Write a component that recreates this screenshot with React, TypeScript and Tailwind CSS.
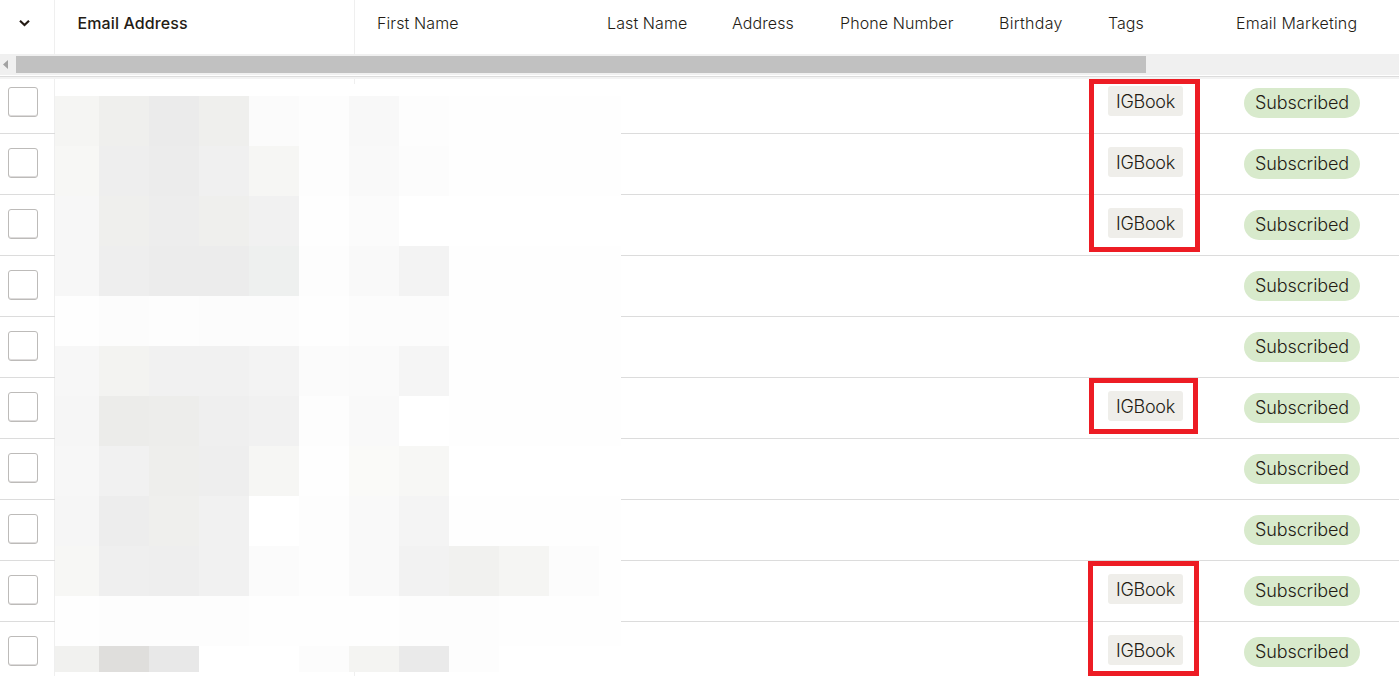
import { clsx } from "clsx";

interface Contact {
  id: number;
  tag?: string;
  status: string;
}

const GRID = "grid grid-cols-[55px_300px_252px_125px_108px_159px_109px_136px_155px]";

const COLUMNS = [
  { label: "First Name", className: "pl-[22px] tracking-[0.1px]" },
  { label: "Last Name", className: "tracking-[0.1px]" },
  { label: "Address", className: "tracking-[0.1px]" },
  { label: "Phone Number", className: "tracking-[0.1px]" },
  { label: "Birthday", className: "tracking-[0.3px]" },
  { label: "Tags", className: "tracking-[0px]" },
  { label: "Email Marketing", className: "-ml-2 tracking-[0.2px]" },
];

const CONTACTS: Contact[] = [
  { id: 1, tag: "IGBook", status: "Subscribed" },
  { id: 2, tag: "IGBook", status: "Subscribed" },
  { id: 3, tag: "IGBook", status: "Subscribed" },
  { id: 4, status: "Subscribed" },
  { id: 5, status: "Subscribed" },
  { id: 6, tag: "IGBook", status: "Subscribed" },
  { id: 7, status: "Subscribed" },
  { id: 8, status: "Subscribed" },
  { id: 9, tag: "IGBook", status: "Subscribed" },
  { id: 10, tag: "IGBook", status: "Subscribed" },
];

// Pixelated cover over the private email and name cells
const MOSAIC = [
  ["#f5f5f3", "#efefed", "#ebebeb", "#efefed", "#fbfbfb", "#fdfdfd", "#f8f8f8", "#fdfdfd", "#fefefe", "#fefefe", "#fefefe", "#fefefe"],
  ["#f7f7f5", "#eeeeee", "#ececec", "#f0f0f0", "#f6f6f4", "#fdfdfd", "#f9f9f9", "#fcfcfc", "#fefefe", "#fefefe", "#fefefe", "#fefefe"],
  ["#f7f7f7", "#efefed", "#ededed", "#efefed", "#f1f1f1", "#fefefe", "#fbfbfb", "#ffffff", "#ffffff", "#ffffff", "#ffffff", "#ffffff"],
  ["#f7f7f7", "#eeeeee", "#ececec", "#ececec", "#eef0ef", "#fdfdfd", "#f9f9f9", "#f3f3f3", "#fefefe", "#fefefe", "#fefefe", "#fefefe"],
  ["#fefefe", "#fcfcfc", "#fdfdfd", "#fcfcfc", "#fcfcfc", "#fefefe", "#fcfcfc", "#fcfcfc", "#fefefe", "#fefefe", "#fefefe", "#fefefe"],
  ["#f7f7f7", "#f3f3f1", "#f1f1f1", "#f1f1f1", "#f3f3f3", "#fbfbfb", "#fafafa", "#f5f5f5", "#fefefe", "#fefefe", "#fefefe", "#fefefe"],
  ["#f6f6f6", "#ececea", "#ededeb", "#efefef", "#f1f1f1", "#fdfdfd", "#f9f9f9", "#ffffff", "#fefefe", "#fefefe", "#fefefe", "#fefefe"],
  ["#f7f7f7", "#f1f1f1", "#eeeeec", "#eeeeee", "#f6f6f4", "#fefefe", "#fafaf8", "#f7f7f5", "#ffffff", "#ffffff", "#ffffff", "#ffffff"],
  ["#f6f6f6", "#ededed", "#efefed", "#f1f1f1", "#ffffff", "#fdfdfd", "#f9f9f9", "#f4f4f4", "#fefefe", "#fefefe", "#fefefe", "#fefefe"],
  ["#f7f7f5", "#efefef", "#eeeeee", "#f1f1f1", "#fbfbfb", "#fdfdfd", "#f9f9f9", "#f2f2f2", "#f1f1ef", "#f5f5f3", "#fcfcfc", "#fefefe"],
  ["#fefefe", "#fdfdfd", "#fdfdfd", "#fdfdfd", "#fefefe", "#fefefe", "#fefefe", "#fdfdfd", "#fdfdfd", "#fefefe", "#fefefe", "#fefefe"],
  ["#f1f1ef", "#dfdedc", "#e8e8e8", "#ffffff", "#ffffff", "#fcfcfc", "#f4f4f2", "#eaeaea", "#fdfdfd", "#ffffff", "#ffffff", "#ffffff"],
];

const TableHeader = () => (
  <div className={clsx(GRID, "h-[54px] text-base leading-[46px] font-light")}>
    <div className="border-r border-[#efefef] pl-[19px] pt-[20px]">
      <svg width="11" height="7" viewBox="0 0 11 7" fill="none" className="block">
        <path d="M1 0.8L5.5 5L10 0.8" stroke="#241c15" strokeWidth="2.2" />
      </svg>
    </div>
    <div className="border-r border-[#efefef] pl-[22.5px] font-medium tracking-[0.12px]">Email Address</div>
    {COLUMNS.map(({ label, className }) => (
      <div key={label} className={clsx("whitespace-nowrap", className)}>
        {label}
      </div>
    ))}
  </div>
);

const Scrollbar = () => (
  <div className="flex h-[21px] items-center bg-[#f0f0f0]">
    <div className="flex w-4 pl-[3px]">
      <svg width="5" height="9" viewBox="0 0 5 9" className="block">
        <path d="M5 0V9L0 4.5Z" fill="#a3a3a3" />
      </svg>
    </div>
    <div className="h-[17px] w-[1130px] bg-[#c1c1c1]" />
  </div>
);

const ContactRow = ({ contact }: { contact: Contact }) => (
  <div className={clsx(GRID, "h-[61px] shrink-0 border-b border-[#dcdcdc] text-lg leading-[30px] font-light")}>
    <div className="border-r border-[#efefef] pl-2 pt-[14px]">
      <div className="size-[30px] rounded-[3px] border border-[#bdbbb9] bg-white shadow-[inset_0_-1px_0_#dedcdc]" />
    </div>
    <div className="border-r border-[#efefef]" />
    <div className="col-start-8 pt-[13px]">
      {contact.tag && (
        <span className="block h-[30px] w-[75px] rounded-[3px] bg-[#efeeea] text-center leading-8 tracking-[-0.3px]">
          {contact.tag}
        </span>
      )}
    </div>
    <div className="pt-[15px]">
      <span className="block h-[30px] w-[116px] rounded-full bg-[#d8eacc] text-center tracking-[-0.1px]">
        {contact.status}
      </span>
    </div>
  </div>
);

const Mosaic = () => (
  <div className="absolute left-[55px] top-[84px] w-[566px] bg-white pt-3">
    {MOSAIC.map((row, y) => (
      <div key={y} className={clsx("flex", y === MOSAIC.length - 1 ? "h-[26px]" : "h-[50px]")}>
        {row.map((color, x) => (
          <div
            key={x}
            className={clsx(x === 0 ? "w-11" : x === row.length - 1 ? "w-[22px]" : "w-[50px]")}
            style={{ backgroundColor: color }}
          />
        ))}
      </div>
    ))}
  </div>
);

export default function App() {
  return (
    <div className="relative flex h-[676px] w-[1399px] flex-col overflow-hidden bg-white font-['Inter','Liberation_Sans',sans-serif] text-[#241c15]">
      <TableHeader />
      <Scrollbar />
      <div className="mt-px h-[3px] border-t border-[#dcdcdc] bg-[#f3f3f3]" />
      <div className="flex min-h-0 flex-1 flex-col overflow-hidden">
        {/* First row is partly scrolled under the header */}
        <div className="-mt-1.5 flex flex-col">
          {CONTACTS.map(contact => (
            <ContactRow key={contact.id} contact={contact} />
          ))}
        </div>
      </div>
      <Mosaic />

      {/* Highlights around the tagged contacts */}
      <div className="absolute left-[1089px] top-[79px] h-[173px] w-[111px] border-[5px] border-[#ed1c24]" />
      <div className="absolute left-[1089px] top-[378px] h-[56px] w-[109px] border-[5px] border-[#ed1c24]" />
      <div className="absolute left-[1088px] top-[561px] h-[115px] w-[111px] border-[5px] border-[#ed1c24]" />
    </div>
  );
}
